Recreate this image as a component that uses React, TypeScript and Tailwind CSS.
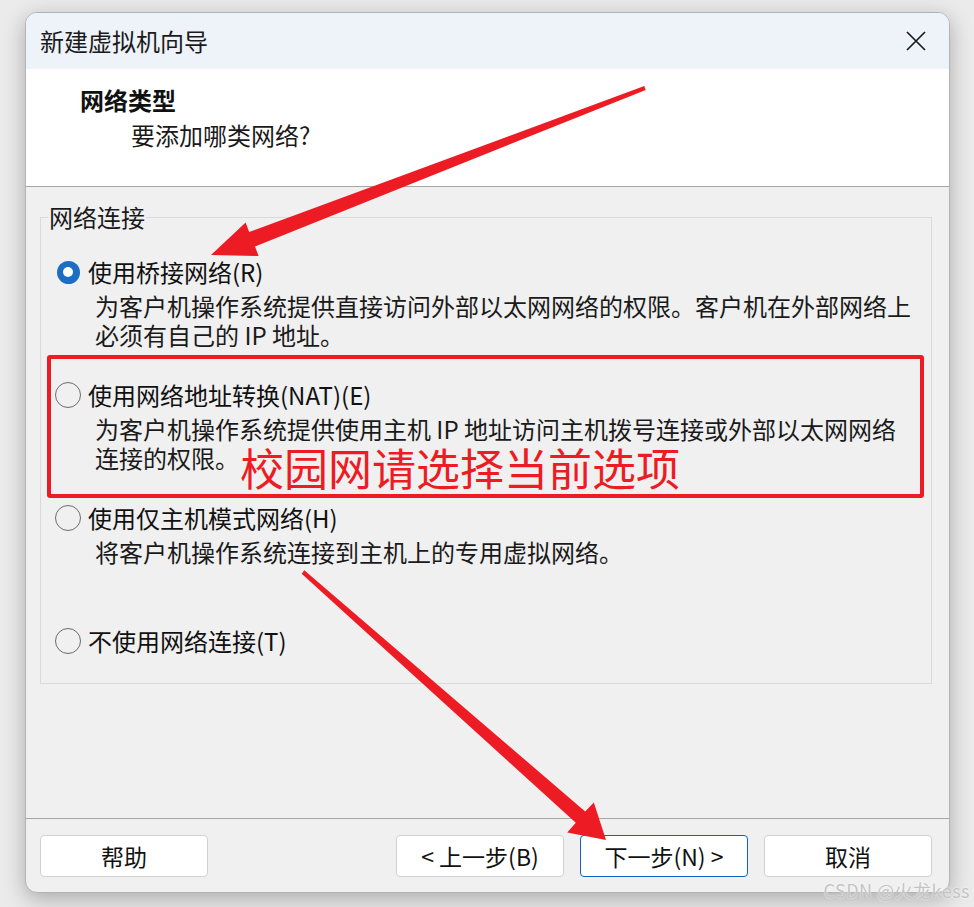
import React from 'react';

const font = "font-['Noto_Sans_CJK_SC','Noto_Sans',sans-serif]";

function Radio({ checked }: { checked?: boolean }) {
  if (checked) {
    return (
      <span className="w-[26px] h-[26px] flex items-center justify-center shrink-0">
        <span className="w-[23px] h-[23px] rounded-full bg-[#1b6ec2] flex items-center justify-center">
          <span className="w-[10px] h-[10px] rounded-full bg-white" />
        </span>
      </span>
    );
  }
  return <span className="w-[26px] h-[26px] rounded-full border-[1.5px] border-[#6b6b6b] shrink-0" />;
}

interface OptionProps {
  label: string;
  checked?: boolean;
  lines?: string[];
  className?: string;
}

function Option({ label, checked, lines, className }: OptionProps) {
  return (
    <div className={className}>
      <div className="flex items-center h-[30px] gap-[7px]">
        <Radio checked={checked} />
        <span className="text-[24px] leading-[30px] whitespace-nowrap text-[#111]">{label}</span>
      </div>
      {lines && (
        <div className="ml-[40px] mt-[4px] text-[24px] leading-[29px] whitespace-nowrap text-[#1a1a1a]">
          {lines.map((l) => (
            <div key={l}>{l}</div>
          ))}
        </div>
      )}
    </div>
  );
}

function WizButton({ children, primary }: { children: React.ReactNode; primary?: boolean }) {
  return (
    <button
      className={
        'w-[168px] h-[42px] rounded-[4px] bg-white text-[23px] leading-none text-[#111] flex items-center justify-center border ' +
        (primary ? 'border-[#0a64c0]' : 'border-[#d2d2d2]')
      }
    >
      {children}
    </button>
  );
}

export default function App() {
  return (
    <div className={'relative w-[974px] h-[907px] overflow-hidden bg-[#ebebeb] ' + font}>
      <div className="pt-[12px] pl-[25px]">
        <div className="w-[925px] h-[881px] flex flex-col rounded-[12px] border border-[#b3b3b3] overflow-hidden bg-[#f0f0f0] shadow-[0_6px_22px_rgba(0,0,0,0.28)]">
          {/* title bar */}
          <div className="h-[56px] shrink-0 bg-[#eef2f9] flex items-center justify-between pl-[14px] pr-[23px]">
            <span className="text-[24px] leading-none text-[#1a1a1a]">新建虚拟机向导</span>
            <svg width="20" height="20" viewBox="0 0 20 20">
              <path d="M1 1 L19 19 M19 1 L1 19" stroke="#1a1a1a" strokeWidth="1.7" />
            </svg>
          </div>

          {/* header */}
          <div className="h-[118px] shrink-0 bg-white border-b border-[#a6a6a6] pt-[16px]">
            <div className="pl-[54px] text-[24px] leading-[30px] font-bold text-[#111]">网络类型</div>
            <div className="pl-[105px] mt-[5px] text-[24px] leading-[30px] text-[#1a1a1a]">要添加哪类网络?</div>
          </div>

          {/* body */}
          <div className="flex-1 pt-[18px]">
            <fieldset className="ml-[14px] w-[892px] border border-[#dadada] p-0 m-0">
              <legend className="ml-[7px] px-[1px] text-[24px] leading-[24px] text-[#1a1a1a]">网络连接</legend>
              <div className="pl-[14px] pt-[28px] pb-[27px]">
                <Option
                  checked
                  label="使用桥接网络(R)"
                  lines={['为客户机操作系统提供直接访问外部以太网网络的权限。客户机在外部网络上', '必须有自己的 IP 地址。']}
                />
                <Option
                  className="mt-[31px]"
                  label="使用网络地址转换(NAT)(E)"
                  lines={['为客户机操作系统提供使用主机 IP 地址访问主机拨号连接或外部以太网网络', '连接的权限。']}
                />
                <Option
                  className="mt-[31px]"
                  label="使用仅主机模式网络(H)"
                  lines={['将客户机操作系统连接到主机上的专用虚拟网络。']}
                />
                <Option className="mt-[60px]" label="不使用网络连接(T)" />
              </div>
            </fieldset>
          </div>

          {/* footer */}
          <div className="h-[74px] shrink-0 border-t border-[#a6a6a6] pt-[16px] pl-[14px] pr-[17px] flex items-start">
            <WizButton>帮助</WizButton>
            <div className="flex-1" />
            <div className="flex gap-[16px]">
              <WizButton>&lt; 上一步(B)</WizButton>
              <WizButton primary>下一步(N) &gt;</WizButton>
              <WizButton>取消</WizButton>
            </div>
          </div>
        </div>
      </div>

      {/* annotation: red box */}
      <div className="absolute left-[47px] top-[355px] w-[877px] h-[143px] border-[4px] border-[#ed1c24] rounded-[3px]" />
      <div className="absolute left-[240px] top-[445px] text-[44px] leading-[44px] text-[#ed1c24] whitespace-nowrap">
        校园网请选择当前选项
      </div>

      {/* annotation: arrows */}
      <svg className="absolute inset-0 pointer-events-none" width="974" height="907" viewBox="0 0 974 907">
        <polygon
          fill="#ed1c24"
          points="211,255 258.6,256 255,246.5 645.7,89.9 644.3,86.1 249.2,231.9 245.6,222.4"
        />
        <polygon
          fill="#ed1c24"
          points="606,840 593.8,802.5 585.2,811.5 304.3,570.3 301.7,573.7 575.8,822.8 567.2,832.5"
        />
      </svg>

      <div className="absolute right-[4px] bottom-[8px] text-[18px] leading-none tracking-[0.5px] text-[#c4c4c4] [text-shadow:0_0_2px_#ffffff]">
        CSDN @火龙kess
      </div>
    </div>
  );
}
